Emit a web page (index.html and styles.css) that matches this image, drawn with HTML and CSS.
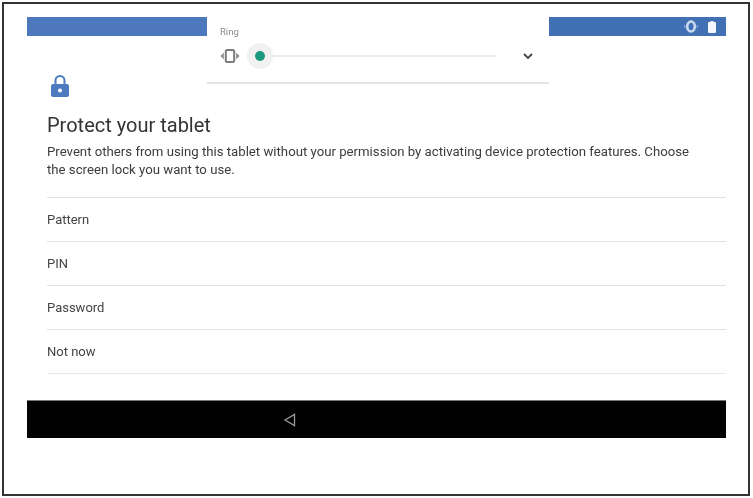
FILE: index.html
```html
<!DOCTYPE html>
<html lang="en">
<head>
<meta charset="utf-8">
<title>Protect your tablet</title>
<link rel="stylesheet" href="styles.css">
</head>
<body>
<div class="frame">
  <div class="screen">
    <header class="statusbar">
      <div class="status-left"></div>
      <div class="status-gap"></div>
      <div class="status-right">
        <svg width="14" height="13" viewBox="0 0 14 13"><path d="M1.200 4.500v4L0 6.500zM12.800 4.500v4L14 6.500z" fill="#a9c3e4"/><ellipse cx="7" cy="6.500" rx="3.800" ry="5" fill="none" stroke="#c9daef" stroke-width="2.600"/></svg>
        <svg width="8" height="12" viewBox="0 0 8 12"><path d="M2.500 0h3v1H7a1 1 0 0 1 1 1v9a1 1 0 0 1-1 1H1a1 1 0 0 1-1-1V2a1 1 0 0 1 1-1h1.500z" fill="#f4f7fb"/></svg>
      </div>
      <div class="volume">
        <div class="vol-label">Ring</div>
        <div class="vol-row">
          <svg class="vibrate" width="20" height="14" viewBox="0 0 20 14"><rect x="5.800" y="1" width="8.400" height="12" rx="1.500" fill="none" stroke="#7b7b7b" stroke-width="2"/><path d="M3.800 3.500v7L0.500 7zM16.200 3.500v7L19.500 7z" fill="#8c8c8c"/></svg>
          <div class="slider">
            <div class="halo"><span class="dot"></span></div>
            <div class="track"></div>
          </div>
          <svg class="chevron" width="10" height="7" viewBox="0 0 10 7"><path d="M1 1l4 4 4-4" fill="none" stroke="#444" stroke-width="1.800"/></svg>
        </div>
      </div>
    </header>
    <main class="content">
      <svg class="lock" width="20" height="24" viewBox="0 0 20 24"><path d="M5.500 11V6.500a4.500 4.500 0 0 1 9 0V11" fill="none" stroke="#4c7abf" stroke-width="2"/><rect x="1" y="10" width="18" height="13" rx="2" fill="#4c7abf"/><circle cx="10" cy="16.500" r="2" fill="#fff"/></svg>
      <h1 class="title">Protect your tablet</h1>
      <p class="desc">Prevent others from using this tablet without your permission by activating device protection features. Choose the screen lock you want to use.</p>
      <ul class="options">
        <li>Pattern</li>
        <li>PIN</li>
        <li>Password</li>
        <li>Not now</li>
      </ul>
    </main>
    <footer class="navbar">
      <svg width="13" height="14" viewBox="0 0 13 14"><path d="M11.500 1.500v11L2 7z" fill="none" stroke="#999" stroke-width="1.300"/></svg>
    </footer>
  </div>
</div>
</body>
</html>
```
FILE: styles.css
```css
html, body { margin: 0; padding: 0; background: #fff; }
body { width: 753px; height: 498px; overflow: hidden; font-family: Roboto, "Liberation Sans", sans-serif; }
.frame { box-sizing: border-box; width: 748px; height: 494px; margin: 2px 0 0 2px; border: 2px solid #333; padding: 13px 22px 0 23px; }
.screen { display: flex; flex-direction: column; height: 421px; }
.statusbar { position: relative; display: flex; height: 19px; flex: none; }
.status-left { width: 180px; background: #4d78bd; }
.status-gap { width: 342px; }
.status-right { flex: 1; background: #4170b5; display: flex; align-items: center; justify-content: flex-end; gap: 10px; padding-right: 10px; }
.volume { position: absolute; top: 0; left: 180px; width: 342px; height: 67px; box-sizing: border-box; border-bottom: 2px solid #e4e4e4; padding: 9px 0 0 13px; background: #fff; filter: blur(0.4px); }
.vol-label { font-size: 9.500px; line-height: 11px; color: #8a8a8a; }
.vol-row { display: flex; align-items: center; margin-top: 6px; height: 26px; }
.vibrate { flex: none; }
.slider { width: 249px; margin-left: 7px; height: 26px; display: flex; align-items: center; }
.track { flex: 1; height: 2px; background: #ececec; }
.halo { width: 26px; height: 26px; border-radius: 50%; background: #f1f1f1; display: flex; align-items: center; justify-content: center; flex: none; }
.dot { width: 10px; height: 10px; border-radius: 50%; background: #1a9a7f; }
.chevron { margin-left: 27px; }
.content { flex: 1; padding: 0 0 0 20px; filter: blur(0.4px); }
.lock { display: block; margin: 38px 0 0 3px; }
.title { font-size: 20px; line-height: 26px; font-weight: 400; color: #333; margin: 14px 0 0; }
.desc { font-size: 13.200px; line-height: 18px; color: #3c3c3c; margin: 5px 0 0; max-width: 655px; }
.options { list-style: none; margin: 18px 0 0; padding: 0; }
.options li { height: 43px; line-height: 43px; border-top: 1px solid #e2e2e2; font-size: 13px; color: #444; }
.options li:last-child { border-bottom: 1px solid #e8e8e8; }
.navbar { height: 38px; flex: none; background: #020202; border-top: 1px solid #777; box-sizing: border-box; display: flex; align-items: center; padding-left: 256px; }
```
